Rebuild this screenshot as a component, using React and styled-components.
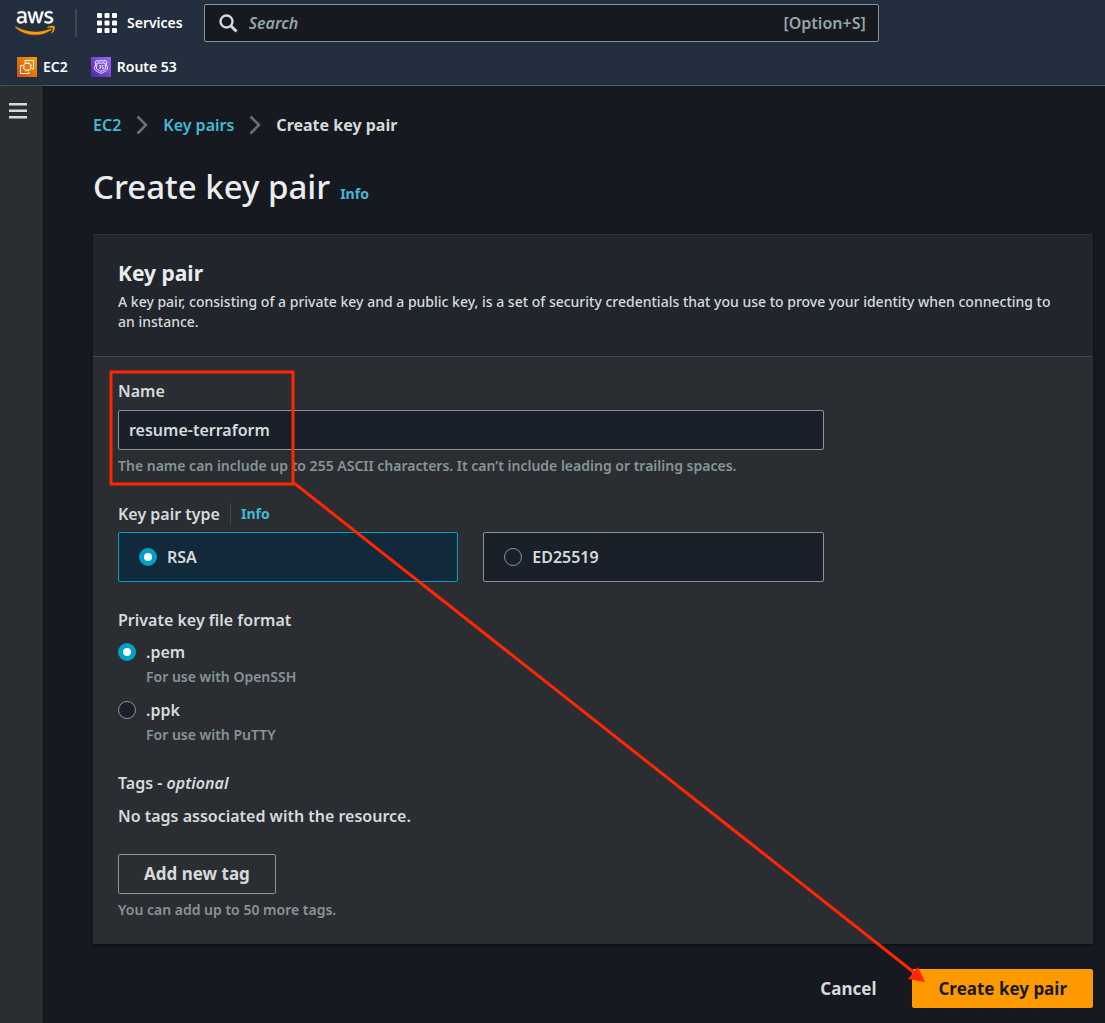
import React, { useState } from "react";
import styled, { createGlobalStyle } from "styled-components";

const GlobalStyle = createGlobalStyle`
  *, *::before, *::after { box-sizing: border-box; }
  body {
    margin: 0;
    background: #16191f;
    color: #d5dbdb;
    font-family: "Noto Sans", "Open Sans", sans-serif;
    font-size: 16px;
    font-weight: 570;
    line-height: 22px;
  }
  a { text-decoration: none; }
  button, input { font: inherit; color: inherit; }
`;

const Page = styled.div`
  position: relative;
  min-height: 100vh;
  display: flex;
  flex-direction: column;
`;

const Header = styled.header`
  background: #232f3e;
  border-bottom: 1px solid #545b64;
`;

const TopBar = styled.div`
  display: flex;
  align-items: center;
  height: 46px;
  padding-left: 15px;
`;

const LogoLink = styled.a`
  display: flex;
  padding-right: 20px;
`;

const ServicesButton = styled.button`
  display: flex;
  align-items: center;
  gap: 10px;
  height: 28px;
  padding: 0 21px 0 20px;
  border: 0;
  border-left: 2px solid #414750;
  background: none;
  color: #fff;
  font-size: 14px;
  font-weight: 600;
`;

const SearchBox = styled.label`
  display: flex;
  align-items: center;
  flex: 0 1 675px;
  gap: 11px;
  height: 38px;
  padding: 0 12px 0 14px;
  border: 1px solid #879596;
  border-radius: 2px;
  background: #16191f;
  color: #95a5a6;
`;

const SearchInput = styled.input`
  flex: 1;
  min-width: 0;
  padding: 0;
  border: 0;
  outline: 0;
  background: none;
  &::placeholder { color: #95a5a6; font-style: italic; opacity: 1; }
`;

const Favorites = styled.nav`
  display: flex;
  align-items: center;
  gap: 23px;
  height: 39px;
  padding: 2px 0 0 17px;
`;

const FavoriteLink = styled.a`
  display: flex;
  align-items: center;
  gap: 6px;
  color: #fff;
  font-size: 14px;
  font-weight: 600;
`;

const Body = styled.div`
  display: flex;
  flex: 1;
`;

const Sidebar = styled.aside`
  flex: 0 0 43px;
  padding: 17px 0 0 9px;
  background: #2a2e33;
  box-shadow: 1px 0 1px #0f1114;
`;

const MenuButton = styled.button`
  display: flex;
  padding: 0;
  border: 0;
  background: none;
  color: #d5dbdb;
`;

const Main = styled.main`
  flex: 1;
  min-width: 0;
  padding: 28px 12px 15px 50px;
`;

const Breadcrumbs = styled.nav`
  display: flex;
  align-items: center;
  gap: 15px;
`;

const Crumb = styled.a`
  color: #44b9d6;
`;

const CurrentCrumb = styled.span`
  font-weight: 700;
`;

const TitleRow = styled.div`
  display: flex;
  align-items: baseline;
  gap: 10px;
  margin: 28px 0 24px;
`;

const Title = styled.h1`
  margin: 0;
  color: #eaeded;
  font-size: 33px;
  font-weight: 500;
  line-height: 46px;
`;

const InfoLink = styled.a`
  color: #44b9d6;
  font-size: 14px;
  font-weight: 700;
`;

const Panel = styled.section`
  border-top: 1px solid #2e3338;
  background: #2a2e33;
  box-shadow: 0 1px 2px #0b0d10;
`;

const PanelHeader = styled.div`
  padding: 24px 25px;
  border-bottom: 1px solid #414750;
  background: #21252c;
`;

const PanelTitle = styled.h2`
  margin: 0 0 5px;
  color: #eaeded;
  font-size: 21px;
  font-weight: 700;
  line-height: 28px;
`;

const PanelText = styled.p`
  margin: 0;
  font-size: 14px;
  font-weight: 500;
  line-height: 20px;
`;

const PanelBody = styled.div`
  padding: 23px 25px 24px;
`;

const Field = styled.div`
  max-width: calc(75% - 7px);
  margin-bottom: 27px;
`;

const FieldLabel = styled.label`
  display: block;
  margin-bottom: 8px;
`;

const TextInput = styled.input`
  display: block;
  width: 100%;
  height: 40px;
  padding: 0 10px;
  border: 1px solid #879596;
  border-radius: 2px;
  background: #1a2029;
`;

const Hint = styled.div`
  margin-top: 6px;
  color: #879596;
  font-size: 14px;
  line-height: 20px;
`;

const GroupHeading = styled.div`
  display: flex;
  align-items: center;
  gap: 10px;
  margin-bottom: ${(p) => (p.$roomy ? "10px" : "7px")};
`;

const InfoDivided = styled(InfoLink)`
  padding-left: 10px;
  border-left: 1px solid #414750;
`;

const Tiles = styled.div`
  display: grid;
  grid-template-columns: 1fr 1fr;
  gap: 25px;
`;

const Tile = styled.label`
  display: flex;
  align-items: center;
  gap: 10px;
  height: 50px;
  padding: 0 20px;
  border: 1px solid ${(p) => (p.$selected ? "#00a1c9" : "#879596")};
  border-radius: 2px;
  background: ${(p) => (p.$selected ? "#12293b" : "#1a2029")};
`;

const Radio = styled.input`
  appearance: none;
  flex: none;
  width: 18px;
  height: 18px;
  margin: 0;
  border: 1px solid #879596;
  border-radius: 50%;
  background: #1a2029;
  &:checked {
    border: 5px solid #00a1c9;
    background: #fff;
  }
`;

const Option = styled.div`
  display: grid;
  grid-template-columns: 18px 1fr;
  column-gap: 10px;
  align-items: center;
  margin-bottom: 12px;
`;

const OptionHint = styled.div`
  grid-column: 2;
  margin-top: 4px;
  color: #879596;
  font-size: 14px;
  line-height: 20px;
`;

const Tags = styled.div`
  display: flex;
  flex-direction: column;
  align-items: flex-start;
`;

const TagsText = styled.p`
  margin: 11px 0 27px;
`;

const Button = styled.button`
  height: ${(p) => (p.$kind === "outline" ? "40px" : "39px")};
  padding: 0 25px;
  border: 1px solid
    ${(p) => ({ outline: "#879596", primary: "#ff9900", link: "transparent" })[p.$kind]};
  border-radius: 2px;
  background: ${(p) => (p.$kind === "primary" ? "#ff9900" : "transparent")};
  color: ${(p) => (p.$kind === "primary" ? "#16191f" : "#d5dbdb")};
  font-size: 17px;
  font-weight: 700;
`;

const Actions = styled.div`
  display: flex;
  justify-content: flex-end;
  gap: 10px;
  margin-top: 25px;
`;

const Annotation = styled.svg`
  position: absolute;
  top: 0;
  left: 0;
  pointer-events: none;
`;

function AwsLogo() {
  return (
    <svg width="40" height="26" viewBox="0 0 304 182" role="img" aria-label="AWS">
      <path
        fill="#fff"
        stroke="#fff"
        strokeWidth="3"
        d="M86.4 66.4c0 3.7.4 6.7 1.1 8.900.8 2.200 1.800 4.600 3.200 7.200.5.8.7 1.600.7 2.300 0 1-.6 2-1.900 3l-6.300 4.200c-.9.6-1.800.9-2.600.9-1 0-2-.5-3-1.400-1.400-1.500-2.600-3.100-3.600-4.700-1-1.700-2-3.600-3.100-5.900-7.800 9.200-17.600 13.800-29.400 13.800-8.400 0-15.100-2.400-20-7.200-4.900-4.800-7.400-11.200-7.400-19.200 0-8.500 3-15.400 9.100-20.600 6.100-5.200 14.200-7.800 24.500-7.800 3.400 0 6.900.3 10.600.8 3.700.5 7.500 1.300 11.500 2.200v-7.300c0-7.600-1.600-12.900-4.700-16-3.200-3.100-8.600-4.600-16.300-4.600-3.500 0-7.100.4-10.800 1.300-3.700.9-7.300 2-10.800 3.400-1.600.7-2.800 1.100-3.500 1.300-.7.2-1.200.3-1.600.3-1.400 0-2.100-1-2.100-3.100v-4.900c0-1.600.2-2.800.7-3.500.5-.7 1.400-1.400 2.800-2.100 3.500-1.800 7.700-3.300 12.600-4.500C41 1.900 46.200 1.300 51.700 1.300c11.900 0 20.600 2.700 26.200 8.100 5.500 5.400 8.300 13.600 8.300 24.600v32.400zM45.800 81.600c3.300 0 6.700-.6 10.300-1.800 3.600-1.200 6.800-3.400 9.500-6.400 1.600-1.900 2.800-4 3.400-6.400.6-2.400 1-5.300 1-8.700v-4.200c-2.900-.7-6-1.300-9.200-1.700-3.200-.4-6.300-.6-9.400-.6-6.700 0-11.600 1.300-14.900 4-3.300 2.700-4.900 6.500-4.900 11.500 0 4.700 1.200 8.200 3.700 10.600 2.400 2.500 5.900 3.700 10.500 3.700zM126.100 92.400c-1.800 0-3-.3-3.800-1-.8-.6-1.500-2-2.100-3.900L96.700 10.200c-.6-2-.9-3.300-.9-4 0-1.600.8-2.500 2.400-2.500h9.800c1.900 0 3.200.3 3.900 1 .8.6 1.400 2 2 3.900l16.800 66.200 15.600-66.200c.5-2 1.100-3.300 1.900-3.900.8-.6 2.200-1 4-1h8c1.900 0 3.200.3 4 1 .8.6 1.500 2 1.900 3.900l15.800 67 17.300-67c.6-2 1.300-3.300 2-3.900.8-.6 2.100-1 3.900-1h9.300c1.600 0 2.500.8 2.500 2.500 0 .5-.1 1-.2 1.600-.1.600-.3 1.400-.7 2.500l-24.100 77.300c-.6 2-1.300 3.300-2.100 3.900-.8.6-2.100 1-3.800 1h-8.600c-1.900 0-3.200-.3-4-1-.8-.7-1.500-2-1.900-4L156 23l-15.400 64.400c-.5 2-1.100 3.300-1.900 4-.8.7-2.200 1-4 1h-8.600zM254.600 95.100c-5.200 0-10.400-.6-15.400-1.800-5-1.200-8.900-2.500-11.500-4-1.600-.9-2.700-1.900-3.100-2.800-.4-.9-.6-1.900-.6-2.800v-5.100c0-2.100.8-3.100 2.300-3.100.6 0 1.200.1 1.800.3.6.2 1.500.6 2.500 1 3.400 1.500 7.100 2.700 11 3.500 4 .8 7.900 1.200 11.900 1.200 6.300 0 11.200-1.100 14.600-3.300 3.400-2.200 5.200-5.400 5.200-9.500 0-2.800-.9-5.100-2.700-7-1.800-1.900-5.200-3.600-10.100-5.200L246 52c-7.300-2.300-12.700-5.700-16-10.200-3.300-4.400-5-9.300-5-14.500 0-4.200.9-7.900 2.700-11.100 1.800-3.200 4.200-6 7.200-8.200 3-2.300 6.400-4 10.400-5.200 4-1.200 8.200-1.700 12.600-1.700 2.200 0 4.500.1 6.700.4 2.300.3 4.400.7 6.500 1.100 2 .5 3.900 1 5.700 1.600 1.800.6 3.200 1.200 4.200 1.800 1.400.8 2.400 1.600 3 2.500.6.8.9 1.900.9 3.300v4.700c0 2.100-.8 3.200-2.300 3.200-.8 0-2.100-.4-3.800-1.200-5.700-2.600-12.100-3.900-19.200-3.900-5.700 0-10.200.9-13.300 2.800-3.100 1.900-4.700 4.800-4.700 8.900 0 2.800 1 5.200 3 7.100 2 1.900 5.700 3.800 11 5.500l14.200 4.500c7.200 2.300 12.400 5.500 15.500 9.600 3.100 4.100 4.600 8.800 4.600 14 0 4.300-.9 8.200-2.600 11.600-1.800 3.400-4.200 6.400-7.300 8.800-3.100 2.500-6.800 4.300-11.100 5.600-4.500 1.400-9.200 2.100-14.300 2.100z"
      />
      <path
        fill="#f90"
        stroke="#f90"
        strokeWidth="3"
        d="M273.500 143.700c-32.900 24.300-80.700 37.200-121.800 37.200-57.600 0-109.500-21.300-148.700-56.700-3.100-2.800-.3-6.600 3.400-4.400 42.400 24.600 94.700 39.500 148.800 39.500 36.500 0 76.600-7.600 113.500-23.200 5.500-2.500 10.200 3.600 4.800 7.600zM287.200 128.100c-4.200-5.400-27.800-2.600-38.500-1.300-3.200.4-3.700-2.400-.8-4.500 18.800-13.200 49.700-9.400 53.300-5 3.600 4.500-1 35.400-18.600 50.200-2.700 2.300-5.300 1.100-4.100-1.900 4-9.900 12.900-32.200 8.700-37.500z"
      />
    </svg>
  );
}

function GridIcon() {
  const steps = [0, 7.5, 15];
  return (
    <svg width="20" height="20" fill="#fff" aria-hidden="true">
      {steps.map((y) => steps.map((x) => <rect key={x + "-" + y} x={x} y={y} width="5" height="5" rx="1" />))}
    </svg>
  );
}

function SearchIcon() {
  return (
    <svg width="19" height="19" fill="none" stroke="#d5dbdb" aria-hidden="true">
      <circle cx="7.5" cy="7.5" r="6" strokeWidth="2.4" />
      <path d="M12 12l5.500 5.500" strokeWidth="3" />
    </svg>
  );
}

function Ec2Icon() {
  return (
    <svg width="20" height="20" aria-hidden="true">
      <defs>
        <linearGradient id="ec2" x1="0" y1="1" x2="1" y2="0">
          <stop stopColor="#c8511b" />
          <stop offset="1" stopColor="#f90" />
        </linearGradient>
      </defs>
      <rect width="20" height="20" fill="url(#ec2)" />
      <g fill="none" stroke="#fff" strokeWidth="0.9">
        <path d="M8 5.500V3.500h8.500v8.500H15M5.500 8.500h-2v8H12V15" />
        <rect x="7" y="6.500" width="6.500" height="6.500" rx="1.500" />
        <path d="M9 6.500V5M11.500 6.500V5M9 14.500V13M11.500 14.500V13M5.500 8.500H7M5.500 11H7M13.500 8.500H15M13.500 11H15" />
      </g>
    </svg>
  );
}

function Route53Icon() {
  return (
    <svg width="20" height="20" aria-hidden="true">
      <defs>
        <linearGradient id="r53" x1="0" y1="1" x2="1" y2="0">
          <stop stopColor="#4d27a8" />
          <stop offset="1" stopColor="#a166ff" />
        </linearGradient>
      </defs>
      <rect width="20" height="20" fill="url(#r53)" />
      <g fill="none" stroke="#fff" strokeWidth="0.9">
        <path d="M4 5l2-1.500 2 .8 2-1 2 .8 2-.8L16 5l-.8 2 1.300 4c0 3-3.500 3.500-6.500 5.500-3-2-6.500-2.500-6.500-5.500l1.300-4z" />
        <path d="M6 6h8l.5 5c0 1.700-2.500 2-4.500 3.500C8 13 5.500 12.700 5.500 11z" />
        <path d="M8 8.500h1.600v3H8M8.300 10h1.300M12.300 8.500h-1.300V10h1.300v1.500h-1.300" strokeWidth="0.7" />
      </g>
    </svg>
  );
}

function Chevron() {
  return (
    <svg width="12" height="20" fill="none" stroke="#687078" strokeWidth="2.5" aria-hidden="true">
      <path d="M1.500 1.500l8.500 8.500-8.500 8.500" />
    </svg>
  );
}

export default function App() {
  const [name, setName] = useState("resume-terraform");
  const [type, setType] = useState("RSA");
  const [format, setFormat] = useState(".pem");

  return (
    <>
      <GlobalStyle />
      <Page>
        <Header>
          <TopBar>
            <LogoLink href="#home"><AwsLogo /></LogoLink>
            <ServicesButton type="button"><GridIcon />Services</ServicesButton>
            <SearchBox>
              <SearchIcon />
              <SearchInput type="text" placeholder="Search" aria-label="Search" />
              <span>[Option+S]</span>
            </SearchBox>
          </TopBar>
          <Favorites aria-label="Favorites">
            <FavoriteLink href="#ec2"><Ec2Icon />EC2</FavoriteLink>
            <FavoriteLink href="#route53"><Route53Icon />Route 53</FavoriteLink>
          </Favorites>
        </Header>
        <Body>
          <Sidebar>
            <MenuButton type="button" aria-label="Open navigation">
              <svg width="18" height="16" fill="currentColor">
                <path d="M0 0h18v2.500H0zM0 6.500h18v2.500H0zM0 13h18v2.500H0z" />
              </svg>
            </MenuButton>
          </Sidebar>
          <Main>
            <Breadcrumbs aria-label="Breadcrumbs">
              <Crumb href="#ec2">EC2</Crumb>
              <Chevron />
              <Crumb href="#key-pairs">Key pairs</Crumb>
              <Chevron />
              <CurrentCrumb>Create key pair</CurrentCrumb>
            </Breadcrumbs>
            <TitleRow>
              <Title>Create key pair</Title>
              <InfoLink href="#info">Info</InfoLink>
            </TitleRow>
            <Panel>
              <PanelHeader>
                <PanelTitle>Key pair</PanelTitle>
                <PanelText>
                  A key pair, consisting of a private key and a public key, is a set of security credentials that you
                  use to prove your identity when connecting to an instance.
                </PanelText>
              </PanelHeader>
              <PanelBody>
                <Field>
                  <FieldLabel htmlFor="name">Name</FieldLabel>
                  <TextInput id="name" type="text" value={name} onChange={(e) => setName(e.target.value)} />
                  <Hint>The name can include up to 255 ASCII characters. It can’t include leading or trailing spaces.</Hint>
                </Field>
                <Field role="radiogroup" aria-labelledby="type-label">
                  <GroupHeading>
                    <span id="type-label">Key pair type</span>
                    <InfoDivided href="#type-info">Info</InfoDivided>
                  </GroupHeading>
                  <Tiles>
                    {["RSA", "ED25519"].map((value) => (
                      <Tile key={value} $selected={type === value}>
                        <Radio type="radio" name="type" checked={type === value} onChange={() => setType(value)} />
                        {value}
                      </Tile>
                    ))}
                  </Tiles>
                </Field>
                <Field role="radiogroup" aria-labelledby="format-label">
                  <GroupHeading $roomy id="format-label">Private key file format</GroupHeading>
                  {[[".pem", "For use with OpenSSH"], [".ppk", "For use with PuTTY"]].map(([value, hint]) => (
                    <Option key={value}>
                      <Radio
                        type="radio"
                        name="format"
                        id={"format" + value}
                        checked={format === value}
                        onChange={() => setFormat(value)}
                      />
                      <label htmlFor={"format" + value}>{value}</label>
                      <OptionHint>{hint}</OptionHint>
                    </Option>
                  ))}
                </Field>
                <Tags>
                  <span>Tags - <em>optional</em></span>
                  <TagsText>No tags associated with the resource.</TagsText>
                  <Button type="button" $kind="outline">Add new tag</Button>
                  <Hint>You can add up to 50 more tags.</Hint>
                </Tags>
              </PanelBody>
            </Panel>
            <Actions>
              <Button type="button" $kind="link">Cancel</Button>
              <Button type="button" $kind="primary">Create key pair</Button>
            </Actions>
          </Main>
        </Body>
        <Annotation width="1105" height="1023" aria-hidden="true">
          <g fill="none" stroke="#ff2600" strokeWidth="3">
            <rect x="111" y="372" width="182" height="112" />
            <path d="M294 483L916 974" />
          </g>
          <path d="M925 982L908 979L918 967Z" fill="#ff2600" />
        </Annotation>
      </Page>
    </>
  );
}
